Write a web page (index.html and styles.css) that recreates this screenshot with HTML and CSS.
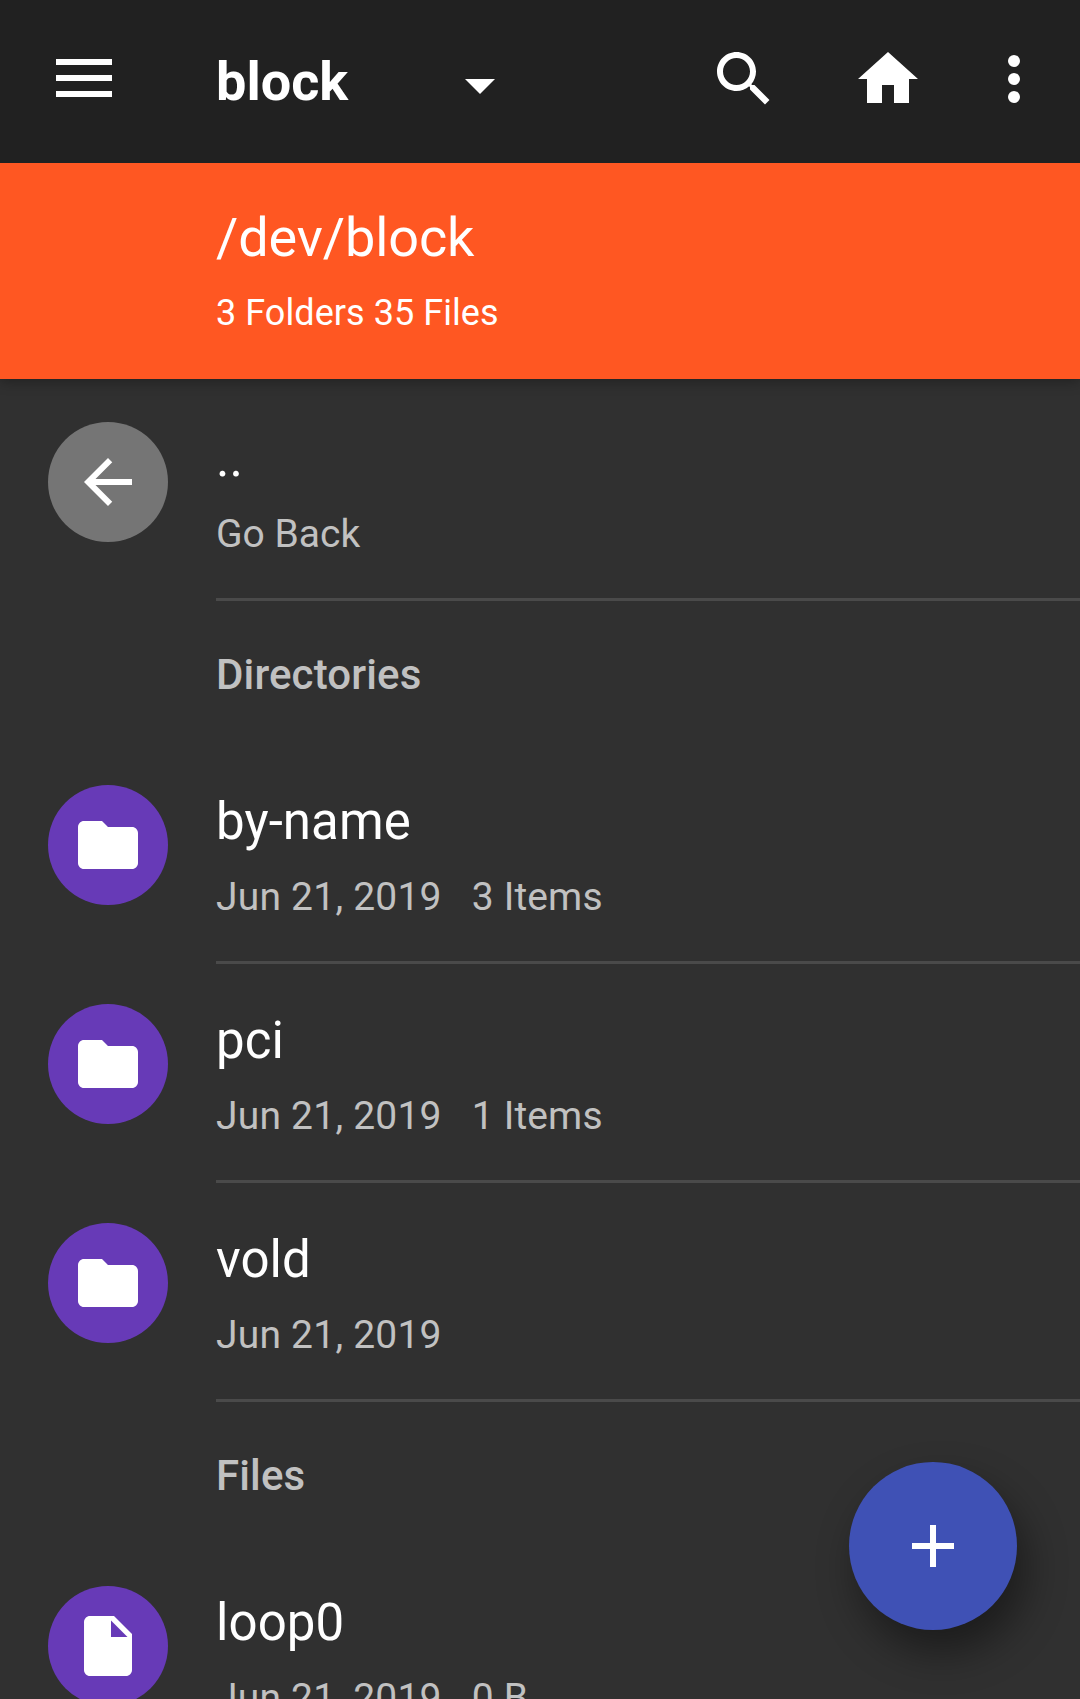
FILE: index.html
```html
<!DOCTYPE html>
<html lang="en">
<head>
<meta charset="utf-8">
<title>block</title>
<link rel="stylesheet" href="styles.css">
</head>
<body>
<div class="screen">
  <header class="appbar">
    <button class="menu" aria-label="Menu"><span></span><span></span><span></span></button>
    <div class="picker">
      <h1>block</h1>
      <svg class="caret" viewBox="0 0 10 5"><path d="M0 0h10L5 5z"/></svg>
    </div>
    <nav class="actions">
      <svg class="icon search" viewBox="0 0 24 24"><path d="M15.5 14h-.79l-.28-.27C15.41 12.59 16 11.11 16 9.5 16 5.91 13.09 3 9.5 3S3 5.91 3 9.5 5.91 16 9.5 16c1.61 0 3.09-.59 4.23-1.57l.27.28v.79l5 4.99L20.49 19l-4.99-5zm-6 0C7.01 14 5 11.99 5 9.5S7.01 5 9.5 5 14 7.01 14 9.5 11.99 14 9.5 14z"/></svg>
      <svg class="icon home" viewBox="0 0 24 24"><path d="M10 20v-6h4v6h5v-8h3L12 3 2 12h3v8z"/></svg>
      <svg class="icon more" viewBox="0 0 24 24"><circle cx="12" cy="6" r="2"/><circle cx="12" cy="12" r="2"/><circle cx="12" cy="18" r="2"/></svg>
    </nav>
  </header>
  <section class="path">
    <div class="path-name">/dev/block</div>
    <div class="path-count">3 Folders 35 Files</div>
  </section>
  <main class="list">
    <div class="row">
      <div class="avatar back"><svg class="icon" viewBox="0 0 24 24"><path d="M20 11H7.83l5.59-5.59L12 4l-8 8 8 8 1.41-1.41L7.83 13H20z"/></svg></div>
      <div class="body"><div class="name">..</div><div class="meta"><span>Go Back</span></div></div>
    </div>
    <h2>Directories</h2>
    <div class="row">
      <div class="avatar"><svg class="icon" viewBox="0 0 24 24"><path d="M10 4H4c-1.1 0-1.99.9-1.99 2L2 18c0 1.1.9 2 2 2h16c1.1 0 2-.9 2-2V8c0-1.1-.9-2-2-2h-8z"/></svg></div>
      <div class="body"><div class="name">by-name</div><div class="meta"><span class="date">Jun 21, 2019</span><span class="size">3 Items</span></div></div>
    </div>
    <div class="row">
      <div class="avatar"><svg class="icon" viewBox="0 0 24 24"><path d="M10 4H4c-1.1 0-1.99.9-1.99 2L2 18c0 1.1.9 2 2 2h16c1.1 0 2-.9 2-2V8c0-1.1-.9-2-2-2h-8z"/></svg></div>
      <div class="body"><div class="name">pci</div><div class="meta"><span class="date">Jun 21, 2019</span><span class="size">1 Items</span></div></div>
    </div>
    <div class="row">
      <div class="avatar"><svg class="icon" viewBox="0 0 24 24"><path d="M10 4H4c-1.1 0-1.99.9-1.99 2L2 18c0 1.1.9 2 2 2h16c1.1 0 2-.9 2-2V8c0-1.1-.9-2-2-2h-8z"/></svg></div>
      <div class="body"><div class="name">vold</div><div class="meta"><span class="date">Jun 21, 2019</span></div></div>
    </div>
    <h2>Files</h2>
    <div class="row">
      <div class="avatar"><svg class="icon" viewBox="0 0 24 24"><path d="M6 2c-1.1 0-1.99.9-1.99 2L4 20c0 1.1.89 2 1.99 2H18c1.1 0 2-.9 2-2V8l-6-6H6zm7 7V3.500L18.500 9H13z"/></svg></div>
      <div class="body"><div class="name">loop0</div><div class="meta"><span class="date">Jun 21, 2019</span><span class="size">0 B</span></div></div>
    </div>
  </main>
  <button class="fab" aria-label="Add"><svg class="icon" viewBox="0 0 24 24"><path d="M19 13h-6v6h-2v-6H5v-2h6V5h2v6h6z"/></svg></button>
</div>
</body>
</html>
```
FILE: styles.css
```css
* { box-sizing: border-box; }
body { margin: 0; background: #303030; }
button { border: 0; padding: 0; background: none; }
svg { display: block; fill: #fff; }

.screen {
  position: relative;
  display: flex;
  flex-direction: column;
  width: 1080px;
  height: 1699px;
  overflow: hidden;
  background: #303030;
  color: #fff;
  font-family: Roboto, sans-serif;
}
.icon { width: 72px; height: 72px; flex: none; }

.appbar {
  z-index: 2;
  display: flex;
  flex: none;
  height: 163px;
  padding: 43px 30px 0 56px;
  background: #212121;
}
.menu {
  display: flex;
  flex-direction: column;
  gap: 10px;
  width: 56px;
  height: 38px;
  margin: 16px 104px 0 0;
}
.menu span { display: block; height: 6px; background: #fff; }
.picker { display: flex; width: 279px; justify-content: space-between; }
h1 { margin: 7px 0 0; font-size: 54px; line-height: 64px; font-weight: 700; }
.caret { width: 30px; height: 15px; margin-top: 36px; }
.actions { display: flex; margin-left: auto; }
.home { margin-left: 72px; }
.more { margin-left: 54px; }

.path {
  z-index: 1;
  flex: none;
  height: 216px;
  padding: 43px 0 0 216px;
  background: #ff5722;
  box-shadow: 0 3px 12px rgba(0, 0, 0, .3);
}
.path-name { font-size: 54px; line-height: 64px; letter-spacing: -.1px; }
.path-count { margin-top: 22px; font-size: 36px; line-height: 42px; letter-spacing: .06px; }

.list { flex: none; padding-top: 3px; }
.row { display: flex; height: 219px; padding-left: 48px; gap: 48px; }
.avatar {
  display: flex;
  align-items: center;
  justify-content: center;
  flex: none;
  width: 120px;
  height: 120px;
  margin-top: 40px;
  border-radius: 50%;
  background: #673ab7;
}
.avatar.back { background: #757575; }
.body { flex: 1; padding-top: 47px; border-bottom: 3px solid #4a4a4a; }
.name { font-size: 51px; line-height: 60px; letter-spacing: .08px; }
.meta {
  display: flex;
  gap: 30px;
  margin-top: 22px;
  color: #c1c1c1;
  font-size: 39px;
  line-height: 46px;
}
.date { letter-spacing: .22px; }
.size { letter-spacing: .15px; }
h2 {
  height: 144px;
  margin: 0;
  padding: 49px 0 0 216px;
  color: #c1c1c1;
  font-size: 42px;
  line-height: 50px;
  font-weight: 500;
  letter-spacing: .13px;
}

.fab {
  position: absolute;
  right: 63px;
  bottom: 69px;
  display: flex;
  align-items: center;
  justify-content: center;
  width: 168px;
  height: 168px;
  border-radius: 50%;
  background: #3f51b5;
  box-shadow: 9px 22px 40px rgba(0, 0, 0, .42);
}
```
